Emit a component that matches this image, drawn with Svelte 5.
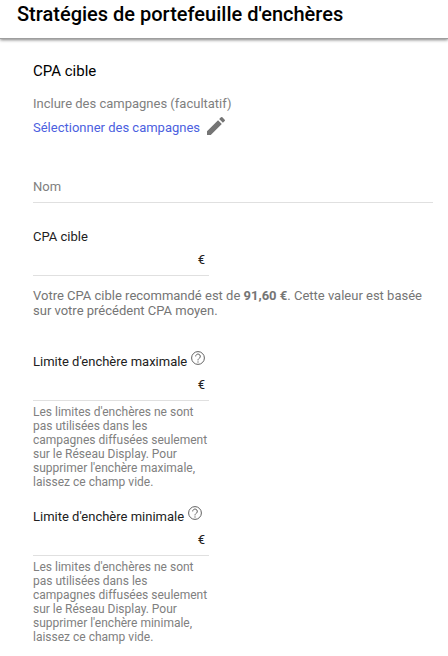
<script>
  let name = $state('');
  let targetCpa = $state('');

  let limits = $state([
    { id: 'limit-max', kind: 'maximale', value: '' },
    { id: 'limit-min', kind: 'minimale', value: '' }
  ]);
</script>

<header class="header">
  <h1>Stratégies de portefeuille d'enchères</h1>
</header>

<main class="content">
  <h2>CPA cible</h2>

  <p class="caption">Inclure des campagnes (facultatif)</p>
  <div class="campaigns">
    <a href="#campaigns">Sélectionner des campagnes</a>
    <button class="icon-button" type="button" aria-label="Modifier">
      <svg width="24" height="24" viewBox="0 0 24 24">
        <path d="M3 17.25V21h3.75L17.81 9.94l-3.75-3.75L3 17.25zM20.71 7.04a1 1 0 0 0 0-1.41l-2.34-2.34a1 1 0 0 0-1.41 0l-1.83 1.83 3.75 3.75 1.83-1.83z" />
      </svg>
    </button>
  </div>

  <input class="name" type="text" placeholder="Nom" aria-label="Nom" bind:value={name} />

  <div class="field">
    <div class="label-row">
      <label for="target-cpa">CPA cible</label>
    </div>
    <div class="amount">
      <input id="target-cpa" type="text" inputmode="decimal" bind:value={targetCpa} />
      <span>€</span>
    </div>
  </div>
  <p class="recommendation">
    Votre CPA cible recommandé est de <strong>91,60 €</strong>. Cette valeur est basée sur votre précédent CPA moyen.
  </p>

  <div class="limits">
    {#each limits as limit (limit.id)}
      <div class="field">
        <div class="label-row">
          <label for={limit.id}>Limite d'enchère {limit.kind}</label>
          <button class="icon-button help" type="button" aria-label="Aide">
            <svg width="16" height="16" viewBox="0 0 16 16">
              <circle class="line" cx="8" cy="8" r="6.4" />
              <path class="line" d="M5.7 6.4a2.3 2.3 0 1 1 3.8 1.7C8.5 8.9 8 9.2 8 10.4" />
              <circle cx="8" cy="12" r=".7" />
            </svg>
          </button>
        </div>
        <div class="amount">
          <input id={limit.id} type="text" inputmode="decimal" bind:value={limit.value} />
          <span>€</span>
        </div>
        <p class="hint">
          Les limites d'enchères ne sont pas utilisées dans les campagnes diffusées seulement sur le Réseau Display. Pour supprimer l'enchère {limit.kind}, laissez ce champ vide.
        </p>
      </div>
    {/each}
  </div>
</main>

<style>
  :global(body) {
    background: #fff;
    font-family: Roboto, Arial, sans-serif;
    font-size: 13px;
    color: #212121;
  }

  h1,
  h2,
  p {
    margin: 0;
  }

  .header {
    padding: 2px 17px 12px;
    border-bottom: 1px solid #9e9e9e;
    box-shadow: 0 1px 3px rgba(0, 0, 0, 0.5);
  }

  h1 {
    font-size: 20px;
    font-weight: 500;
    line-height: 24px;
    color: #000;
  }

  .content {
    padding: 20px 15px 12px 33px;
  }

  h2 {
    font-size: 15px;
    font-weight: 400;
    line-height: 24px;
    color: #000;
  }

  .caption {
    margin-top: 11px;
    line-height: 20px;
    color: #808080;
  }

  .campaigns {
    display: flex;
    align-items: flex-end;
    gap: 4px;
    line-height: 20px;
  }

  a {
    color: #4c5fe0;
    text-decoration: none;
  }

  .icon-button {
    display: flex;
    padding: 0;
    border: 0;
    background: none;
    cursor: pointer;
  }

  svg {
    fill: #757575;
  }

  .line {
    fill: none;
    stroke: #616161;
    stroke-width: 1;
  }

  input {
    box-sizing: border-box;
    width: 100%;
    min-width: 0;
    padding: 0;
    border: 0;
    outline: 0;
    background: none;
    font: inherit;
    color: inherit;
  }

  .name {
    display: block;
    height: 31px;
    margin: 34px 0 24px;
    padding-bottom: 2px;
    border-bottom: 1px solid #e0e0e0;
  }

  .name::placeholder {
    color: #808080;
    opacity: 1;
  }

  .field {
    max-width: 176px;
  }

  .label-row {
    display: flex;
    align-items: flex-start;
    gap: 3px;
    line-height: 20px;
    white-space: nowrap;
  }

  .help {
    margin-top: -2px;
  }

  .amount {
    display: flex;
    align-items: center;
    height: 24px;
    padding: 0 4px 4px 0;
    border-bottom: 1px solid #e0e0e0;
  }

  .recommendation {
    margin-top: 12px;
    line-height: 15px;
    color: #757575;
  }

  strong {
    font-weight: 700;
  }

  .limits {
    display: flex;
    flex-direction: column;
    gap: 18px;
    margin-top: 34px;
  }

  .hint {
    margin-top: 4px;
    font-size: 12px;
    line-height: 14px;
    color: #808080;
  }
</style>
